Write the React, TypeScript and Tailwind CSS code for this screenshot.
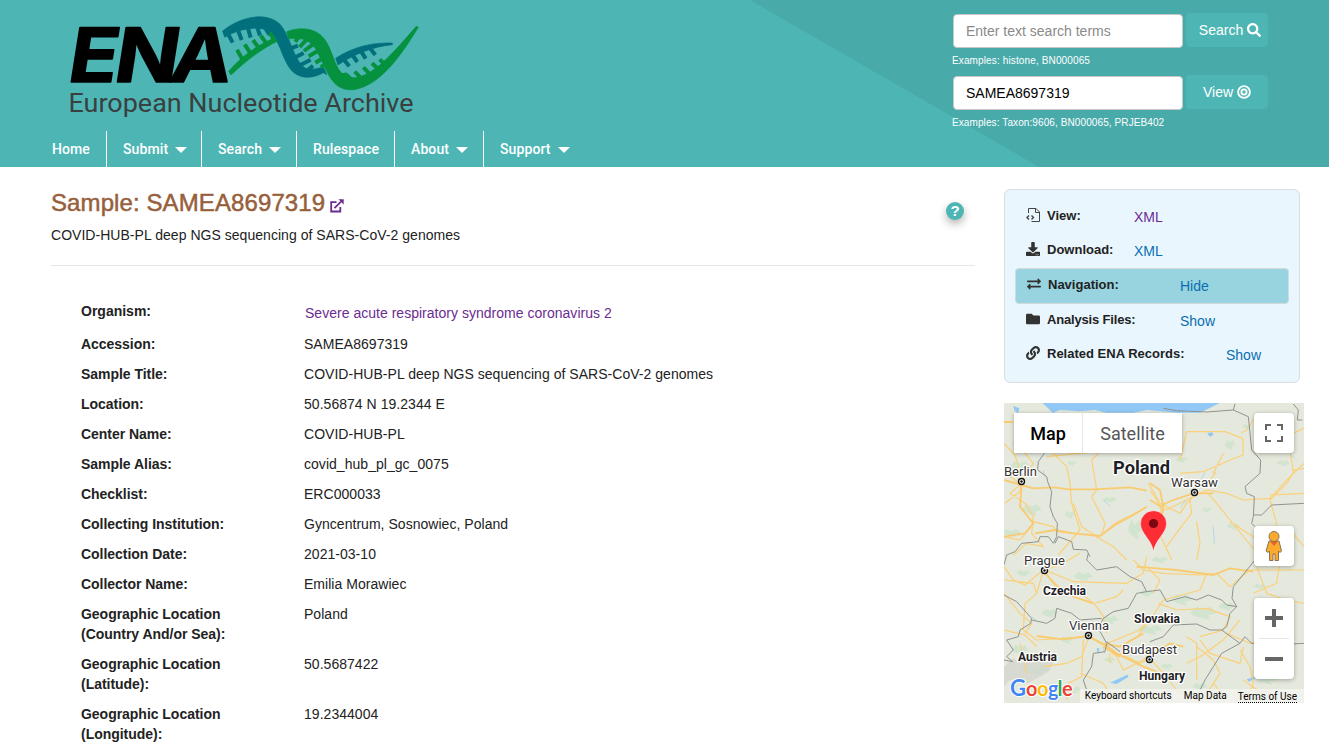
import React from "react";
import { FaSearch, FaDownload, FaExchangeAlt, FaFolder, FaLink } from "react-icons/fa";

const navItems = [
  { label: "Home", width: "w-[66px]", menu: false },
  { label: "Submit", width: "w-[95px]", menu: true },
  { label: "Search", width: "w-[95px]", menu: true },
  { label: "Rulespace", width: "w-[98px]", menu: false },
  { label: "About", width: "w-[89px]", menu: true },
  { label: "Support", width: "w-[100px]", menu: true },
];

const details = [
  ["Accession:", "SAMEA8697319"],
  ["Sample Title:", "COVID-HUB-PL deep NGS sequencing of SARS-CoV-2 genomes"],
  ["Location:", "50.56874 N 19.2344 E"],
  ["Center Name:", "COVID-HUB-PL"],
  ["Sample Alias:", "covid_hub_pl_gc_0075"],
  ["Checklist:", "ERC000033"],
  ["Collecting Institution:", "Gyncentrum, Sosnowiec, Poland"],
  ["Collection Date:", "2021-03-10"],
  ["Collector Name:", "Emilia Morawiec"],
  ["Geographic Location (Country And/or Sea):", "Poland"],
  ["Geographic Location (Latitude):", "50.5687422"],
  ["Geographic Location (Longitude):", "19.2344004"],
];

function Logo() {
  return (
    <svg width="370" height="120" viewBox="60 0 370 120" className="block" aria-label="ENA European Nucleotide Archive">
      <g fontFamily="Inter, sans-serif" fontWeight="700" fontSize="75" fill="#000" stroke="#000" strokeWidth="1.500" strokeLinejoin="round">
        <text transform="translate(66 81.500) skewX(-9)" textLength="49" lengthAdjust="spacingAndGlyphs">E</text>
        <text transform="translate(112 81.500) skewX(-9)" textLength="64" lengthAdjust="spacingAndGlyphs">N</text>
        <text transform="translate(168 81.500) skewX(-9)" textLength="61" lengthAdjust="spacingAndGlyphs">A</text>
      </g>
      <text x="68.500" y="111.500" fontFamily="Roboto, sans-serif" fontSize="26" fill="#3a3f3f" textLength="345" lengthAdjust="spacingAndGlyphs">European Nucleotide Archive</text>
      <g transform="translate(220 5) scale(.33333)">
        <g fill="#02707c" stroke="#02707c" strokeWidth="2">
          <path d="M8 78C60 36 132 20 176 54C212 88 222 178 262 192C280 195 296 190 308 186L314 193L320 209L310 203C272 224 232 222 208 188C184 152 174 94 146 78C112 60 50 74 14 97Z" />
          <path d="M347 160C400 124 460 112 517 114L517 119C460 124 396 150 354 180Z" />
        </g>
        <path d="M26 90L38 113M55 78L65 105M84 70L92 98M112 68L120 92M137 72L149 90M212 130L234 122M221 160L251 144M234 184L272 164M256 202L279 182M370 162L388 184M395 147L412 171M422 137L437 161M449 128L466 150" stroke="#02707c" strokeWidth="12" fill="none" />
        <g fill="#05913d" stroke="#05913d" strokeWidth="2">
          <path d="M26 199C72 146 120 116 166 98L172 109C122 133 78 168 33 210Z" />
          <path d="M200 80C244 64 292 68 318 109C344 151 346 207 388 218C450 225 510 155 589 64L595 67C540 157 480 241 402 254C338 260 324 204 298 153C280 110 252 94 206 102Z" />
        </g>
        <path d="M68 164L51 134M92 146L74 118M117 130L99 105M141 117L122 92M164 108L150 84M240 93L225 110M266 97L239 126M286 113L252 138M300 134L266 154M311 158L286 173M322 176L302 186M376 226L370 204M400 228L375 206M428 224L404 200M453 211L430 187M476 193L456 175M495 179L479 163" stroke="#05913d" strokeWidth="12" fill="none" />
      </g>
    </svg>
  );
}

function TargetIcon() {
  return (
    <svg width="14" height="14" viewBox="0 0 14 14" fill="none" stroke="#fff" strokeWidth="1.900">
      <circle cx="7" cy="7" r="5.900" />
      <circle cx="7" cy="7" r="2.600" />
    </svg>
  );
}

function Header() {
  return (
    <header className="relative flex h-[167px] justify-between overflow-hidden bg-[#4db6b5]">
      <div className="absolute inset-0 bg-[#49aaaa] [clip-path:polygon(750px_0,100%_0,100%_100%,1039px_100%)]" />
      <div className="relative flex flex-col pl-[41px]">
        <div className="h-[131px] pl-[19px]">
          <Logo />
        </div>
        <nav className="flex h-9 font-[Roboto,sans-serif] text-[14px] font-medium tracking-[0.1px] text-white">
          {navItems.map((n, i) => (
            <div
              key={n.label}
              className={`${n.width} flex items-center pt-px whitespace-nowrap ${i === 0 ? "pl-[11px]" : "pl-4"} ${i < 5 ? "border-r border-white" : ""}`}
            >
              {n.label}
              {n.menu && <span className="ml-[7px] h-0 w-0 border-x-[6px] border-t-[6px] border-x-transparent border-t-white" />}
            </div>
          ))}
        </nav>
      </div>
      <div className="relative flex w-[377px] flex-col pt-[13px]">
        <div className="flex h-[35px]">
          <div className="mt-px ml-px flex h-[34px] w-[230px] items-center rounded border border-[#c6c6c6] bg-white pl-3 text-[14px] text-[#8a8a8a]"><span>Enter text search terms</span></div>
          <div className="ml-[3px] flex h-[34px] w-[82px] items-center justify-center gap-1 rounded bg-[#4db6b5] pl-[6px] text-[14px] text-white">
            Search <FaSearch size={14} />
          </div>
        </div>
        <div className="mt-[5px] h-[15px] text-[10px] leading-[15px] tracking-[0.13px] text-white">Examples: histone, BN000065</div>
        <div className="mt-[7px] flex h-[35px]">
          <div className="mt-px ml-px flex h-[34px] w-[230px] items-center rounded border border-[#c6c6c6] bg-white pl-3 text-[14px] text-black"><span>SAMEA8697319</span></div>
          <div className="ml-[3px] flex h-[34px] w-[82px] items-center justify-center gap-1 rounded bg-[#4db6b5] text-[14px] text-white">
            View <TargetIcon />
          </div>
        </div>
        <div className="mt-[5px] h-[15px] text-[10px] leading-[15px] tracking-[0.1px] text-white">Examples: Taxon:9606, BN000065, PRJEB402</div>
      </div>
    </header>
  );
}

function FileViewIcon() {
  return (
    <svg width="14" height="14" viewBox="0 0 14 14" fill="none" stroke="#444" strokeWidth="1">
      <path d="M2.500 5V.5H10L13.500 4V13.500H5.500M9.500 .5V4.500H13.500" />
      <path d="M3 7.500L1 9.500L3 11.500M5.500 7.500L7.500 9.500L5.500 11.500" strokeWidth="1.400" />
    </svg>
  );
}

interface SideRowProps {
  icon: React.ReactNode;
  label: string;
  labelWidth: string;
  link: string;
  height?: string;
  visited?: boolean;
  active?: boolean;
}

function SideRow({ icon, label, labelWidth, link, height = "h-[34px]", visited, active }: SideRowProps) {
  return (
    <div className={`flex items-start ${active ? "-mb-px h-9 rounded border border-[#d3d9db] bg-[#98d3e0] pt-2 pl-[11px]" : `${height} pt-[9px] pl-[11px]`}`}>
      <span className="flex h-[14px] w-[14px] items-center text-[#333]">{icon}</span>
      <span className={`${labelWidth} ml-[7px] text-[13px] leading-4 font-bold whitespace-nowrap text-[#222]`}>{label}</span>
      <span className={`text-[14px] leading-[18px] ${visited ? "text-[#6b2c91]" : "text-[#0a6fb0]"}`}>{link}</span>
    </div>
  );
}

function SidePanel() {
  return (
    <section className="h-[194px] w-[296px] rounded-md border border-[#dadddf] bg-[#e9f6fe] px-[10px] pt-[9px]">
      <SideRow icon={<FileViewIcon />} label="View:" labelWidth="w-[87px]" link="XML" visited />
      <SideRow icon={<FaDownload size={14} />} label="Download:" labelWidth="w-[87px]" link="XML" height="h-[35px]" />
      <SideRow icon={<FaExchangeAlt size={14} />} label="Navigation:" labelWidth="w-[132px]" link="Hide" active />
      <SideRow icon={<FaFolder size={14} />} label="Analysis Files:" labelWidth="w-[133px] tracking-[-0.17px]" link="Show" />
      <SideRow icon={<FaLink size={14} />} label="Related ENA Records:" labelWidth="w-[179px]" link="Show" />
    </section>
  );
}

const patches = [
  [70, 70, 28, 14], [150, 100, 18, 9], [60, 200, 30, 17], [215, 190, 14, 8], [95, 330, 30, 18], [210, 345, 16, 12], [330, 300, 22, 9], [35, 400, 30, 12], [270, 130, 16, 10], [405, 390, 22, 30], [545, 180, 18, 9], [690, 135, 16, 16], [740, 80, 14, 8], [850, 190, 20, 9], [620, 330, 14, 8], [700, 380, 20, 10], [830, 400, 20, 10], [480, 480, 25, 10], [70, 520, 22, 10], [150, 640, 25, 14], [250, 530, 30, 14], [330, 660, 26, 14], [440, 580, 20, 12], [545, 600, 30, 17], [610, 640, 40, 20], [680, 620, 25, 12], [780, 560, 20, 8], [60, 750, 26, 16], [200, 720, 20, 12], [330, 780, 18, 9], [500, 800, 18, 10], [600, 860, 22, 12], [800, 840, 30, 14], [850, 700, 25, 20], [105, 810, 50, 18], [220, 870, 26, 12], [450, 690, 40, 15],
];

function MapLabel({ x, y, w, size, bold, children }: { x: number; y: number; w: number; size: number; bold?: boolean; children: string }) {
  return (
    <text x={x} y={y} fontSize={size} fontWeight={bold ? 700 : 400} textLength={w} lengthAdjust="spacingAndGlyphs" fill={bold ? "#1e2124" : "#333"} stroke="#fff" strokeWidth="2.500" strokeLinejoin="round" paintOrder="stroke">
      {children}
    </text>
  );
}

function MapTile() {
  return (
    <svg width="300" height="300" viewBox="0 0 300 300" className="block" fontFamily="Roboto, sans-serif">
      <rect width="300" height="300" fill="#e5e8dc" />
      <g transform="translate(-4 -3) scale(.33333)">
        {patches.map(([x, y, rx, ry], i) => (
          <path key={i} transform={`translate(${x} ${y})`} d={`M${-rx} 0L${-rx / 2} ${-ry}L0 ${-ry / 2}L${rx / 2} ${-ry}L${rx} 0L${rx / 3} ${ry / 3}L${rx / 2} ${ry}L${-rx / 2} ${ry / 2}Z`} fill="#c9e3ca" opacity=".7" />
        ))}
        <path d="M12 800L40 775L65 790L95 760L130 782L170 770L145 815L85 850L30 840L12 860Z" fill="#d3d4cd" opacity=".7" />
        <g fill="#91c8f5">
          <path d="M128 9L500 9L560 0L660 9L600 38L535 38L440 30L400 38L320 38L285 30L240 34L180 30L158 38Z" />
          <path d="M40 18L58 25L54 40L43 31Z M330 848L382 824L386 830L350 852Z M622 100l14-4l5 9l-12 5Z M740 838l25-8l3 5l-22 10Z M290 745l8 0l-3 20Z" />
        </g>
        <g fill="none" stroke="#a9d3f1" strokeWidth="2.500">
          <path d="M310 300L330 318M80 105l-10 20M605 235l10-18M595 260l30-14M640 380l3 50M870 160l15 16M560 300l-20 22M130 210l4 20M310 745l4 14M95 650l14 12" />
        </g>
        <g fill="none" stroke="#fbd077" strokeWidth="3.500" strokeLinejoin="round">
          <path d="M12 130L45 165L65 230L60 275L15 310M65 240L100 190L75 160L40 130M65 250L30 280L75 310L100 350L95 400L130 440L80 430L40 465M100 365L160 380L170 395L220 400M220 310L245 380L290 410L340 440L380 480M330 40L310 90L300 155L275 180L290 270L275 290L315 370L305 405L345 370L425 330M160 160L200 200L210 250L215 310L240 390L175 465M140 170L290 155L340 140M215 155L200 130M340 65L390 90L420 130M12 215L65 255M12 410L60 420L100 370" />
          <path d="M445 250L475 300L485 340L478 400L515 480M450 270L490 330L510 325L620 270L680 280L730 300L810 295L870 230L912 190M480 310L540 340L560 310L580 290M620 275L650 310L690 360L780 470M570 300L575 340L540 385L500 440M590 365L600 430L590 480M690 365L760 410L810 475M540 220L610 215L690 180L730 165L728 115L675 95L560 95L540 180M770 45L740 90L725 98M855 90L875 180L880 220L860 250L810 300L830 370L812 420L800 480M810 285L912 280M880 210L912 205M855 110L912 85M640 220L670 160M648 215L625 250M870 390L912 440" />
          <path d="M12 500L40 540L75 555L130 510L180 495L240 460M130 515L175 560L250 585L290 620L310 650L320 700M130 512L110 580L75 610L70 690L110 720L190 715L265 710L310 735L350 770L370 810L430 780L480 740M135 510L220 545L380 550L430 520L440 470M285 610L350 590L370 570M12 580L60 640L95 670L75 700M12 690L75 705L110 740M265 715L245 770L200 790L130 800M250 720L245 830L205 850L200 900M360 760L420 790L450 775L490 820L530 870L590 900M240 820L310 850L340 900M310 735L420 690L450 650M330 760L330 790M60 730L80 820M12 540L100 550L110 580" />
          <path d="M400 480L430 510L490 520L600 525L650 520L690 560L750 510L912 510M620 520L600 570L490 600L460 645L415 705M475 610L530 630L620 625L690 650L670 690L600 710M440 500L480 540L460 580M720 660L670 720L600 770L560 790M590 740L640 780L660 820L640 850L680 900M600 720L630 760L720 790L730 740M680 700L750 730L810 710L860 740M770 500L800 580L860 600L912 610M720 750L750 800L760 850L740 900M560 710L590 730L590 840M840 480L830 550L760 580M640 850L610 900M730 840L800 890" />
        </g>
        <g fill="none" stroke="#f9cb70" strokeWidth="5.500" strokeLinejoin="round">
          <path d="M12 240L65 255L100 265L165 262L205 268L280 268L390 262L440 272M65 260L60 320L100 370L75 400L12 410M105 400L165 390L220 400L300 408L345 375L400 345L440 320M12 66H38M450 300L480 318L520 300L580 280L640 280M450 250L480 270L490 320L478 400M410 500L470 505L530 510L640 525L690 505L760 515M130 512L170 560L220 590L280 610M110 708L190 718L265 708L305 730L360 740L430 700M310 730L350 760L430 800L470 815M450 770L510 730L550 740M360 770L310 740" />
        </g>
        <g fill="none" stroke="#8f9391" strokeWidth="3" strokeLinejoin="round">
          <path d="M133 160L115 185L113 210L140 230L143 245L155 275L150 320L160 350L172 370L170 410L160 430L145 410L120 410L115 425L65 430L45 455L20 465L12 495M165 430L175 410L215 425L220 448L260 450L270 470M265 460L260 480L290 510L350 500L390 530L425 545L440 575L410 580L385 625L340 635L310 655L295 685L320 730L315 755L280 760L275 800L250 840L260 870" />
          <path d="M12 585L50 605L95 655L92 670L60 690L55 710L20 720L40 750L20 770L38 785L12 780M95 660L140 670L165 655L170 625L215 640L240 660L305 655M320 725L360 755" />
          <path d="M490 25L530 32L620 36L700 30L705 12M700 30L745 50L755 150L782 180L780 220L735 260L740 280L763 290L760 350L755 370L765 380M762 345L785 345L815 315L912 310M765 480L700 560L696 595L710 620L680 615L665 600L625 585L590 600L555 590L500 605L480 570L440 575M710 620L690 640L680 680L665 690L630 690L590 672L520 675L490 710L450 725M665 690L720 730L665 760L640 800L615 840L600 870M720 730L735 710L755 730L820 735L912 730M880 12L895 30L892 60L907 60" />
        </g>
      </g>
      <g fill="#fff" stroke="#111" strokeWidth="1.400">
        {[[17.5, 78.5], [190.5, 89.5], [40.5, 167.5], [84.5, 232.5], [145.5, 256.5]].map(([x, y]) => (
          <g key={x}>
            <circle cx={x} cy={y} r="3" />
            <circle cx={x} cy={y} r="1.200" fill="#111" stroke="none" />
          </g>
        ))}
      </g>
      <MapLabel x={0} y={72.5} w={33} size={13}>Berlin</MapLabel>
      <MapLabel x={167} y={83.5} w={47} size={13}>Warsaw</MapLabel>
      <MapLabel x={20} y={161.5} w={41} size={13}>Prague</MapLabel>
      <MapLabel x={65} y={226.5} w={40} size={13}>Vienna</MapLabel>
      <MapLabel x={118} y={250.5} w={55} size={13}>Budapest</MapLabel>
      <MapLabel x={109} y={70.5} w={57} size={18} bold>Poland</MapLabel>
      <MapLabel x={39} y={192} w={43} size={12} bold>Czechia</MapLabel>
      <MapLabel x={130} y={220} w={46} size={12} bold>Slovakia</MapLabel>
      <MapLabel x={14} y={258} w={39} size={12} bold>Austria</MapLabel>
      <MapLabel x={135} y={277} w={46} size={12} bold>Hungary</MapLabel>
      <path d="M149.500 149.500C148.500 137 136.500 131 136.500 120.500A13 12.800 0 0 1 162.500 120.500C162.500 131 150.500 137 149.500 149.500Z" fill="#fd2d36" stroke="#fff" strokeWidth=".5" />
      <circle cx="149.500" cy="120.500" r="4.600" fill="#7c0711" />
      <text y="292.500" fontFamily="Lato, sans-serif" fontSize="20" fontWeight="700" stroke="#fff" strokeWidth="2" paintOrder="stroke">
        <tspan x="6" fontSize="22" fill="#4285f4">G</tspan>
        <tspan x="22" fill="#ea4335">o</tspan>
        <tspan x="33" fill="#fbbc05">o</tspan>
        <tspan x="44" fill="#4285f4">g</tspan>
        <tspan x="53.500" fill="#34a853">l</tspan>
        <tspan x="58" fill="#ea4335">e</tspan>
      </text>
    </svg>
  );
}

function LocationMap() {
  return (
    <section className="relative mt-5 h-[300px] w-[300px] overflow-hidden font-[Roboto,sans-serif]">
      <MapTile />
      <div className="absolute top-[10px] left-[10px] flex h-10 bg-white text-[18px] shadow-[0_1px_4px_rgba(0,0,0,.3)]">
        <div className="flex w-[69px] items-center justify-center border-r border-[#e6e6e6] font-medium text-black">Map</div>
        <div className="flex w-[99px] items-center justify-center text-[#565656]">Satellite</div>
      </div>
      <div className="absolute top-[10px] right-[10px] flex h-10 w-10 items-center justify-center rounded-sm bg-white shadow-[0_1px_4px_rgba(0,0,0,.3)]">
        <svg width="18" height="18" viewBox="0 0 18 18" fill="none" stroke="#666" strokeWidth="2"><path d="M1 6V1H6M12 1H17V6M17 12V17H12M6 17H1V12" /></svg>
      </div>
      <div className="absolute top-[123px] right-[10px] flex h-10 w-10 items-center justify-center rounded-sm bg-white pr-px shadow-[0_1px_4px_rgba(0,0,0,.3)]">
        <svg width="18" height="32" viewBox="0 0 18 32" fill="#fbaa2d" stroke="#7a6a4c" strokeWidth=".9">
          <path d="M4 11H14L16.500 21L15 22.500L13.500 21V30.500H10V24H8V30.500H4.500V21L3 22.500L1 21Z" />
          <path d="M5 11.500H13L9 16Z" fill="#e7652d" stroke="none" />
          <circle cx="9" cy="6.500" r="5" />
        </svg>
      </div>
      <div className="absolute top-[195px] right-[10px] flex h-[81px] w-10 flex-col items-center rounded-sm bg-white shadow-[0_1px_4px_rgba(0,0,0,.3)]">
        <svg width="40" height="81" viewBox="0 0 40 81"><path d="M18 11H22V18H29V22H22V29H18V22H11V18H18ZM11 59H29V63H11Z" fill="#666" /><path d="M5 40.500H35" stroke="#e6e6e6" /></svg>
      </div>
      <div className="absolute right-0 bottom-0 flex h-[14px] items-center bg-[#f4f4f0]/80 pr-[7px] pl-[5px] text-[10px] leading-[14px] whitespace-nowrap text-black">
        <span className="w-[99px]">Keyboard shortcuts</span>
        <span className="w-[54px]">Map Data</span>
        <span className="h-[13px] border-b border-dotted border-black leading-[13px]">Terms of Use</span>
      </div>
    </section>
  );
}

function ExternalIcon() {
  return (
    <svg width="14" height="14" viewBox="0 0 14 14" fill="none" stroke="#6b2c91" strokeWidth="1.800" className="mt-[5px] ml-[5px]">
      <path d="M6.500 3.200H1.200V12.500H10.300V8M4.500 9.200L11 2.700" />
      <path d="M8.500 .3H13.700V5.500Z" fill="#6b2c91" stroke="none" />
    </svg>
  );
}

export default function App() {
  return (
    <div className="h-[747px] w-[1329px] overflow-hidden bg-white font-['Liberation_Sans',Arial,sans-serif] text-[#222]">
      <Header />
      <main className="flex pl-[51px]">
        <div className="w-[924px] pt-[22px]">
          <div className="flex h-[76.500px] justify-between border-b border-[#e8e8e8]">
            <div>
              <h1 className="flex h-7 items-center text-[24px] leading-7 tracking-[0.1px] text-[#985f3d] [-webkit-text-stroke:0.5px_#985f3d]">
                Sample: SAMEA8697319
                <ExternalIcon />
              </h1>
              <p className="mt-2 text-[14px] leading-5 tracking-[0.035px]">COVID-HUB-PL deep NGS sequencing of SARS-CoV-2 genomes</p>
            </div>
            <div className="mt-[13px] mr-[11px] flex h-[18px] w-[18px] items-center justify-center rounded-full bg-[#4db6b5] text-[15px] font-bold text-white shadow-[0_4px_8px_rgba(0,0,0,.3)]">?</div>
          </div>
          <dl className="pt-[35px] pl-[30px] text-[14px] leading-5">
            <div className="flex h-[33px]">
              <dt className="w-[224px] font-bold">Organism:</dt>
              <dd className="pt-0.5 tracking-[0.02px] text-[#6b2c91]">Severe acute respiratory syndrome coronavirus 2</dd>
            </div>
            {details.map(([k, v]) => (
              <div key={k} className="flex pb-[10px]">
                <dt className="w-[223px] pr-[70px] font-bold tracking-[-0.03px]">{k}</dt>
                <dd className="tracking-[0.035px]">{v}</dd>
              </div>
            ))}
          </dl>
        </div>
        <aside className="ml-[29px] pt-[22px]">
          <SidePanel />
          <LocationMap />
        </aside>
      </main>
    </div>
  );
}
